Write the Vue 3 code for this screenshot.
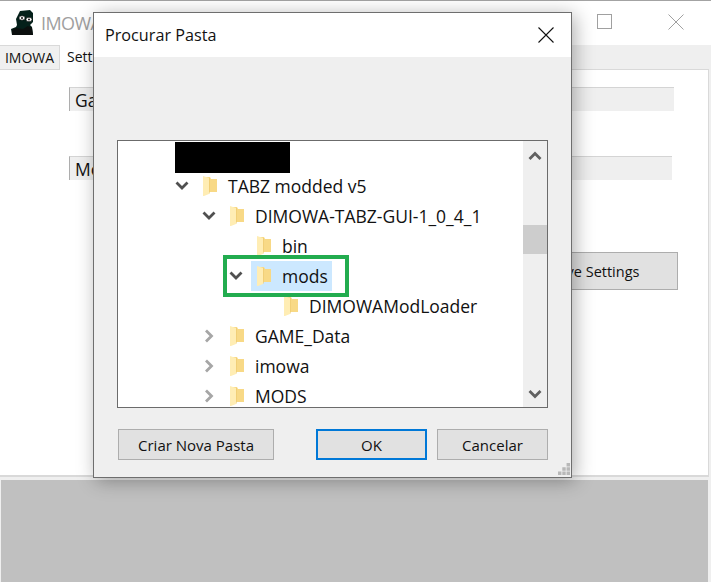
<template>
  <div class="page">
    <div class="main-window">
      <header class="titlebar">
        <svg class="logo" width="24" height="26" viewBox="0 0 24 26">
          <path d="M9 1 L19 0 L22 3 L22 12 L19 15 L21 17 L22 25 L1 25 L0 19 L5 17 L6 15 L5 9 Z" fill="#04201a" />
          <path d="M5 18 L1 20 L1 25 L22 25 L21 18 L17 16 L12 19 Z" fill="#0b0f0e" />
          <ellipse cx="11" cy="8" rx="3" ry="2.2" fill="#fff" stroke="#000" stroke-width=".6" />
          <ellipse cx="18" cy="9.5" rx="3" ry="2.2" fill="#fff" stroke="#000" stroke-width=".6" />
          <circle cx="11" cy="8" r="1" fill="#111" />
          <circle cx="18" cy="9.5" r="1" fill="#111" />
        </svg>
        <span class="app-name">IMOWA</span>
        <div class="win-controls">
          <span class="max-btn"></span>
          <svg class="close-main" width="16" height="16" viewBox="0 0 16 16">
            <path d="M.5 .5 L15.5 15.5 M15.5 .5 L.5 15.5" stroke="#a0a0a0" stroke-width="1" fill="none" />
          </svg>
        </div>
      </header>

      <nav class="tabs">
        <div class="tab">IMOWA</div>
        <div class="tab active">Settings</div>
      </nav>

      <section class="settings">
        <div class="field field-game"><span>Game path</span></div>
        <div class="field field-mods"><span>Mods path</span></div>
        <div class="save-row">
          <button class="save-btn">Save Settings</button>
        </div>
      </section>

      <div class="log-area"></div>
    </div>

    <div class="dialog">
      <div class="dialog-title">
        <span>Procurar Pasta</span>
        <svg width="16" height="16" viewBox="0 0 16 16">
          <path d="M.5 .5 L15.5 15.5 M15.5 .5 L.5 15.5" stroke="#111" stroke-width="1.1" fill="none" />
        </svg>
      </div>
      <div class="dialog-body">
        <div class="tree">
          <div class="tree-list">
            <div
              v-for="row in rows"
              :key="row.name"
              class="tree-row"
              :style="{ paddingLeft: 57 + (row.level - 1) * 27 + 'px' }"
            >
              <span class="chevron">
                <svg v-if="row.open === true" width="14" height="10" viewBox="0 0 14 10">
                  <path d="M1.5 1.5 L7 7 L12.5 1.5" stroke="#505050" stroke-width="2.8" fill="none" />
                </svg>
                <svg v-else-if="row.open === false" width="10" height="14" viewBox="0 0 10 14">
                  <path d="M2 1.5 L7.5 7 L2 12.5" stroke="#a6a6a6" stroke-width="2.8" fill="none" />
                </svg>
              </span>
              <span class="node" :class="{ selected: row.selected }">
                <svg class="folder" width="14" height="20" viewBox="0 0 14 20">
                  <path d="M1 1 L7 1 L8 3 L14 3 L14 16 L1 16 Z" fill="#f8d986" />
                  <path d="M0 0 L6 2 L6 18 L1 20 L0 20 Z" fill="#ffedb4" />
                  <path d="M6 2 L6.6 2 L6.6 17 L6 18 Z" fill="#ecc86e" />
                </svg>
                <span class="node-label">{{ row.name }}</span>
              </span>
            </div>
          </div>
          <div class="scrollbar">
            <svg width="14" height="10" viewBox="0 0 14 10">
              <path d="M1.5 8 L7 2.5 L12.5 8" stroke="#606060" stroke-width="2.8" fill="none" />
            </svg>
            <div class="scroll-track"><div class="scroll-thumb"></div></div>
            <svg width="14" height="10" viewBox="0 0 14 10">
              <path d="M1.5 2 L7 7.5 L12.5 2" stroke="#606060" stroke-width="2.8" fill="none" />
            </svg>
          </div>
          <div class="redaction"></div>
          <div class="highlight"></div>
        </div>
        <div class="dialog-footer">
          <button class="btn btn-new">Criar Nova Pasta</button>
          <button class="btn btn-ok">OK</button>
          <button class="btn btn-cancel">Cancelar</button>
        </div>
      </div>
      <svg class="grip" width="12" height="12" viewBox="0 0 14 14">
        <path d="M10 0h4v4h-4z M5 5h4v4h-4z M10 5h4v4h-4z M0 10h4v4h-4z M5 10h4v4h-4z M10 10h4v4h-4z" fill="#b8b8b8" />
      </svg>
    </div>
  </div>
</template>

<script setup>
const rows = [
  { name: 'Hidden', level: 1, hidden: true },
  { name: 'TABZ modded v5', level: 1, open: true },
  { name: 'DIMOWA-TABZ-GUI-1_0_4_1', level: 2, open: true },
  { name: 'bin', level: 3 },
  { name: 'mods', level: 3, open: true, selected: true },
  { name: 'DIMOWAModLoader', level: 4 },
  { name: 'GAME_Data', level: 2, open: false },
  { name: 'imowa', level: 2, open: false },
  { name: 'MODS', level: 2, open: false },
]
</script>

<style>
body {
  margin: 0;
  background: #fff;
}
</style>

<style scoped>
.page {
  position: relative;
  width: 711px;
  height: 582px;
  overflow: hidden;
  font-family: "Open Sans", "Noto Sans", sans-serif;
  color: #111;
}

.main-window {
  display: flex;
  flex-direction: column;
  height: 582px;
  border-top: 1px solid #a3a3a3;
  box-sizing: border-box;
  background: #efefef;
}

.titlebar {
  display: flex;
  align-items: center;
  height: 44px;
  padding-left: 11px;
  background: #fff;
  flex-shrink: 0;
}

.logo {
  margin-top: -1px;
}

.app-name {
  margin-left: 6px;
  font-size: 18px;
  letter-spacing: -0.6px;
  color: #a0a0a0;
}

.win-controls {
  margin-left: auto;
  display: flex;
  align-items: center;
  gap: 56px;
  padding-right: 27px;
  margin-top: -3px;
}

.max-btn {
  width: 13px;
  height: 13px;
  border: 1px solid #a0a0a0;
}

.tabs {
  display: flex;
  height: 24px;
  flex-shrink: 0;
  background: #efefef;
}

.tab {
  width: 60px;
  height: 25px;
  box-sizing: border-box;
  border: 1px solid #d9d9d9;
  border-left: 0;
  background: #f0f0f0;
  font-size: 14px;
  line-height: 24px;
  text-align: center;
  position: relative;
}

.tab.active {
  width: 80px;
  border: 0;
  background: #fff;
  text-align: left;
  padding-left: 7px;
  line-height: 23px;
}

.settings {
  height: 408px;
  box-sizing: border-box;
  margin-right: 2px;
  padding: 17px 35px 0 69px;
  background: #fff;
  border: 1px solid #d9d9d9;
  border-left: 0;
  border-bottom-width: 2px;
  flex-shrink: 0;
}

.field {
  height: 24px;
  box-sizing: border-box;
  margin-right: -1px;
  background: #efefef;
  border-left: 1px solid #adadad;
  border-top: 1px solid #d4d4d4;
  padding-left: 5px;
  font-size: 17.5px;
  line-height: 24px;
}

.field-mods {
  margin-top: 45px;
  margin-right: 1px;
}

.save-row {
  display: flex;
  justify-content: flex-end;
  margin-top: 72px;
  margin-right: -5px;
}

.save-btn {
  width: 166px;
  height: 38px;
  background: #e1e1e1;
  border: 1px solid #adadad;
  font-family: inherit;
  font-size: 14.5px;
  color: #111;
  padding: 0;
}

.log-area {
  flex: 1;
  margin: 3px 3px 0 1px;
  background: #c0c0c0;
}

.dialog {
  position: absolute;
  left: 93px;
  top: 12px;
  width: 479px;
  height: 466px;
  box-sizing: border-box;
  display: flex;
  flex-direction: column;
  background: #efefef;
  border: 1px solid #6e6e6e;
  box-shadow: 3px 3px 18px rgba(0, 0, 0, 0.32);
}

.dialog-title {
  height: 44px;
  display: flex;
  align-items: center;
  justify-content: space-between;
  padding: 0 17px 0 11px;
  background: #fff;
  font-size: 16.2px;
  flex-shrink: 0;
}

.dialog-body {
  flex: 1;
  display: flex;
  flex-direction: column;
  padding: 83px 23px 0;
}

.tree {
  position: relative;
  display: flex;
  width: 431px;
  height: 268px;
  box-sizing: border-box;
  background: #fff;
  border: 1px solid #6b6b6b;
}

.tree-list {
  flex: 1;
  overflow: hidden;
}

.tree-row {
  display: flex;
  align-items: center;
  height: 30px;
  font-size: 17.5px;
  white-space: nowrap;
}

.chevron {
  width: 14px;
  margin-right: 8px;
  display: flex;
  justify-content: center;
  align-items: center;
  flex-shrink: 0;
}

.node {
  display: flex;
  align-items: center;
  height: 30px;
  padding: 0 4px 0 6px;
}

.node.selected {
  background: #cce8ff;
}

.folder {
  margin-right: 11px;
  flex-shrink: 0;
}

.scrollbar {
  width: 24px;
  display: flex;
  flex-direction: column;
  align-items: center;
  background: #efefef;
  padding: 10px 0 8px;
  box-sizing: border-box;
}

.scroll-track {
  flex: 1;
  width: 100%;
  padding-top: 64px;
  box-sizing: border-box;
}

.scroll-thumb {
  height: 29px;
  background: #cdcdcd;
}

.redaction {
  position: absolute;
  left: 57px;
  top: 1px;
  width: 115px;
  height: 31px;
  background: #000;
}

.highlight {
  position: absolute;
  left: 105px;
  top: 114px;
  width: 126px;
  height: 42px;
  box-sizing: border-box;
  border: 4px solid #22ac4f;
}

.dialog-footer {
  display: flex;
  margin-top: 21px;
  padding-left: 1px;
}

.btn {
  height: 31px;
  box-sizing: border-box;
  background: #e1e1e1;
  border: 1px solid #adadad;
  font-family: inherit;
  font-size: 15px;
  color: #111;
  padding: 0;
}

.btn-new {
  width: 156px;
}

.btn-ok {
  width: 111px;
  margin-left: 42px;
  border: 2px solid #0078d7;
}

.btn-cancel {
  width: 111px;
  margin-left: 10px;
}

.grip {
  position: absolute;
  right: 1px;
  bottom: 2px;
}
</style>
